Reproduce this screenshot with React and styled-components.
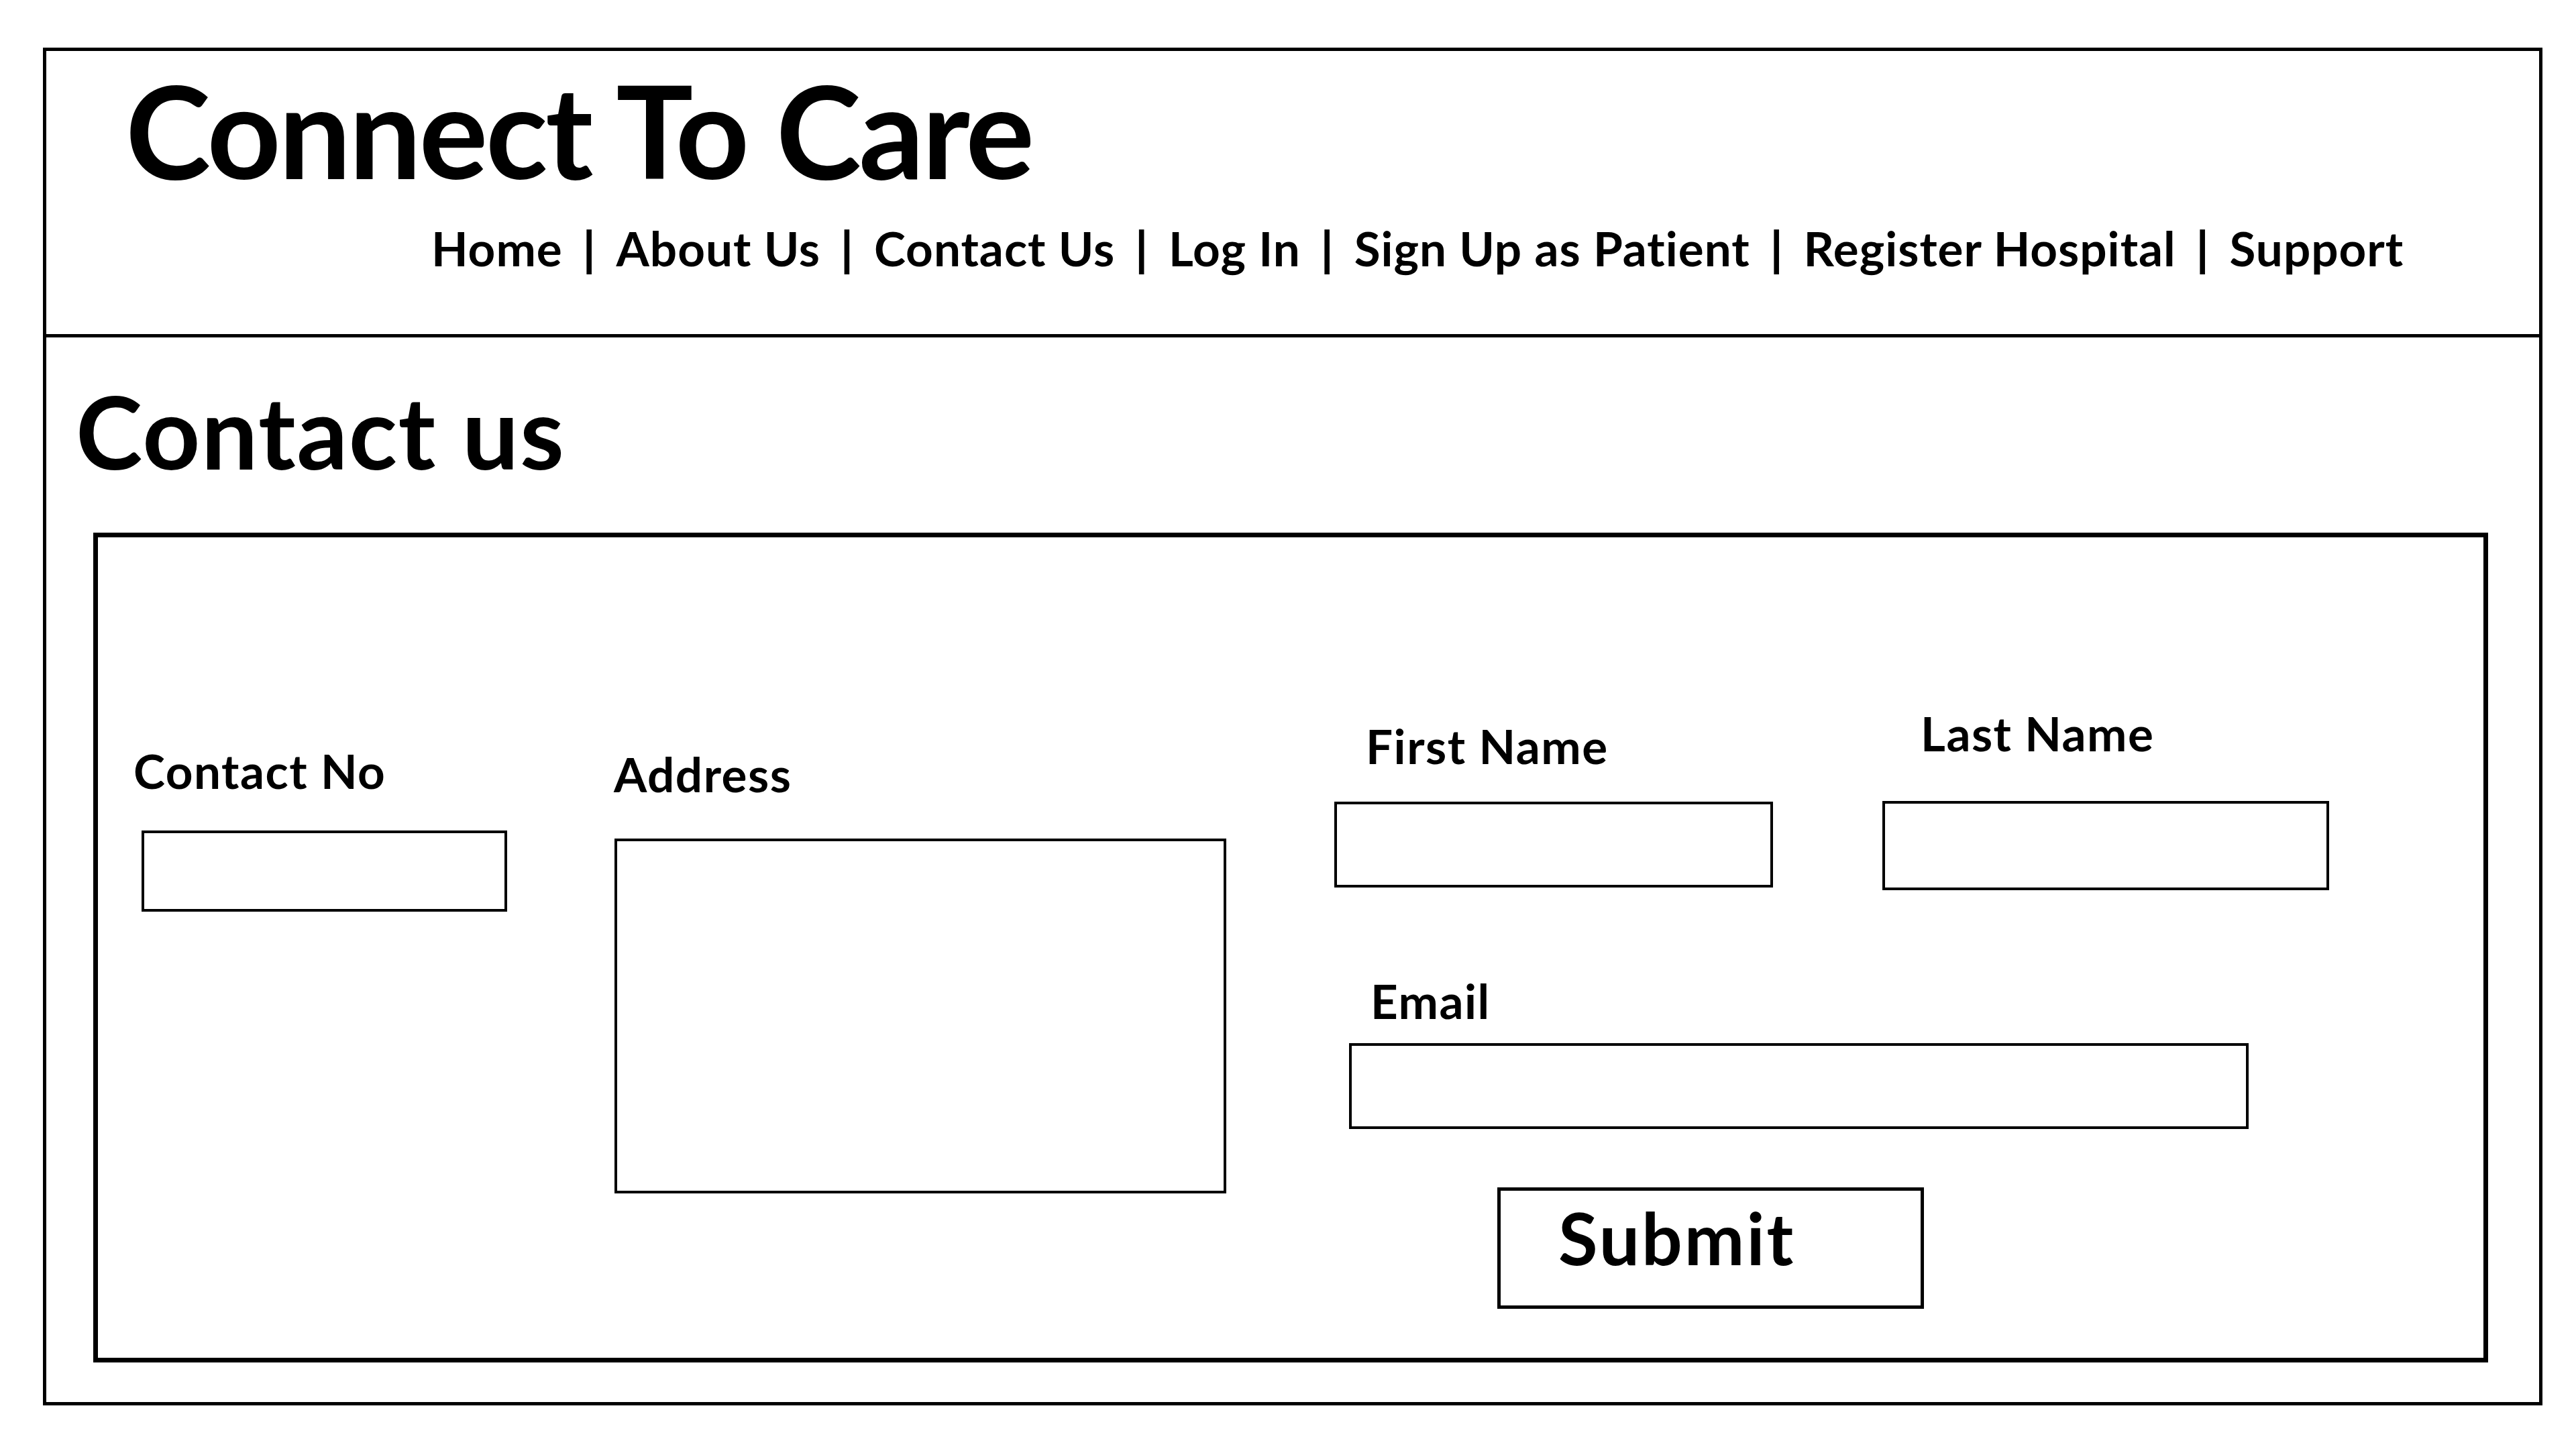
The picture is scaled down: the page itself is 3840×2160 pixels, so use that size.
import React from 'react'
import styled, { createGlobalStyle } from 'styled-components'

const GlobalStyle = createGlobalStyle`
  html, body {
    margin: 0;
    padding: 0;
    background: #fff;
  }
  body {
    font-family: Lato, "Open Sans", sans-serif;
    color: #000;
  }
`

const navLinks = ['Home', 'About Us', 'Contact Us', 'Log In', 'Sign Up as Patient', 'Register Hospital', 'Support']

const App = () => {
  return (
    <>
      <GlobalStyle />
      <Frame>
        {/* header.. start */}
        <Header>
          <Brand>Connect To Care</Brand>
          <Nav>
            {navLinks.map((link, i) => (
              <React.Fragment key={link}>
                {i > 0 && <Sep>|</Sep>}
                <NavLink href="#">{link}</NavLink>
              </React.Fragment>
            ))}
          </Nav>
        </Header>
        {/* header.. end */}

        <Heading>Contact us</Heading>

        {/* contact form.. start */}
        <Form onSubmit={(e) => e.preventDefault()}>
          <Field $ml={53} $mt={312}>
            <Label>Contact No</Label>
            <Input $ml={12} $gap={54} $w={545} $h={121} />
          </Field>

          <Field $ml={159} $mt={317}>
            <Label>Address</Label>
            <TextArea $ml={1} $gap={61} $w={912} $h={529} />
          </Field>

          <RightColumn>
            <NameRow>
              <Field $mt={19}>
                <Label $ml={47}>First Name</Label>
                <Input $gap={48} $w={654} $h={128} />
              </Field>
              <Field $ml={163}>
                <Label $ml={57}>Last Name</Label>
                <Input $gap={66} $w={666} $h={133} />
              </Field>
            </NameRow>
            <Field $ml={22} $mt={129}>
              <Label $ml={32}>Email</Label>
              <Input $gap={28} $w={1341} $h={128} />
            </Field>
            <SubmitButton type="submit">Submit</SubmitButton>
          </RightColumn>
        </Form>
        {/* contact form.. end */}
      </Frame>
    </>
  )
}

const Frame = styled.div`
  box-sizing: border-box;
  width: 3726px;
  margin: 71px 0 0 64px;
  border: 5px solid #000;
  background: #fff;
`

const Header = styled.header`
  box-sizing: border-box;
  height: 427px;
  padding: 21px 0 0 118px;
  border-bottom: 5px solid #000;
  display: flex;
  flex-direction: column;
  align-items: flex-start;
`

const Brand = styled.h1`
  margin: 0;
  font-size: 192px;
  line-height: 1;
  font-weight: 700;
  letter-spacing: -3.5px;
`

const Nav = styled.nav`
  margin: 45px 0 0 456px;
  display: flex;
  align-items: baseline;
  gap: 30px;
  font-size: 71px;
  line-height: 1;
  font-weight: 700;
  letter-spacing: 1px;
`

const NavLink = styled.a`
  color: #000;
  text-decoration: none;
`

const Sep = styled.span`
  font-weight: 900;
`

const Heading = styled.h2`
  margin: 64px 0 0 44px;
  font-size: 150px;
  line-height: 1;
  font-weight: 700;
  letter-spacing: 1.5px;
`

const Form = styled.form`
  box-sizing: border-box;
  width: 3570px;
  margin: 77px 0 59px 70px;
  padding-bottom: 73px;
  border: 7px solid #000;
  display: flex;
  align-items: flex-start;
`

const Field = styled.div`
  display: flex;
  flex-direction: column;
  align-items: flex-start;
  margin-left: ${({ $ml }) => $ml || 0}px;
  margin-top: ${({ $mt }) => $mt || 0}px;
`

const Label = styled.label`
  display: block;
  margin-left: ${({ $ml }) => $ml || 0}px;
  font-size: 71px;
  line-height: 1;
  font-weight: 700;
  letter-spacing: 1.5px;
  white-space: nowrap;
`

const Input = styled.input`
  box-sizing: border-box;
  display: block;
  width: ${({ $w }) => $w}px;
  height: ${({ $h }) => $h}px;
  margin: ${({ $gap }) => $gap}px 0 0 ${({ $ml }) => $ml || 0}px;
  padding: 0 20px;
  border: 4px solid #000;
  border-radius: 0;
  background: #fff;
  outline: none;
  font-size: 48px;
`

const TextArea = styled.textarea`
  box-sizing: border-box;
  display: block;
  width: ${({ $w }) => $w}px;
  height: ${({ $h }) => $h}px;
  margin: ${({ $gap }) => $gap}px 0 0 ${({ $ml }) => $ml || 0}px;
  padding: 20px;
  border: 4px solid #000;
  border-radius: 0;
  background: #fff;
  outline: none;
  resize: none;
  font-size: 48px;
`

const RightColumn = styled.div`
  margin: 256px 0 0 161px;
  display: flex;
  flex-direction: column;
  align-items: flex-start;
`

const NameRow = styled.div`
  display: flex;
  align-items: flex-start;
`

const SubmitButton = styled.button`
  box-sizing: border-box;
  width: 636px;
  height: 181px;
  margin: 87px 0 0 243px;
  padding: 0 0 32px 86px;
  border: 5px solid #000;
  border-radius: 0;
  background: #fff;
  display: flex;
  align-items: center;
  font-family: Lato, "Open Sans", sans-serif;
  font-size: 107px;
  line-height: 1;
  font-weight: 700;
  letter-spacing: 3px;
  color: #000;
  cursor: pointer;
`

export default App
